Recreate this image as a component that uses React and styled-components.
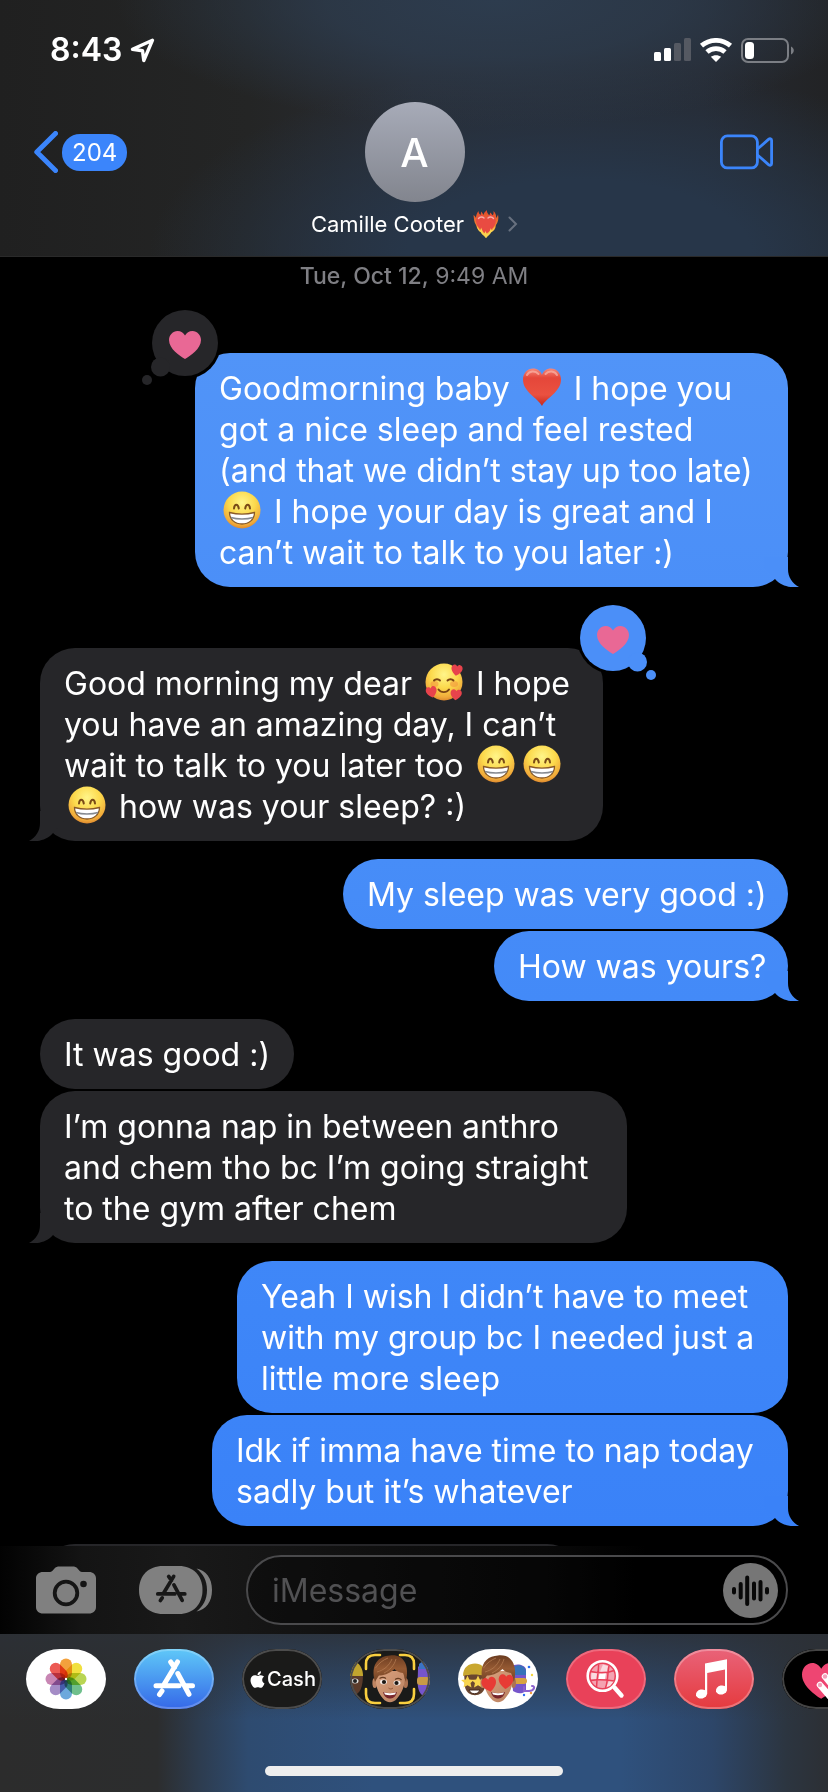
import React from "react";
import styled, { createGlobalStyle } from "styled-components";
import { FaApple } from "react-icons/fa";

const GlobalStyle = createGlobalStyle`
  * { box-sizing: border-box; }
  body { margin: 0; background: #000; font-family: Inter, "Liberation Sans", sans-serif; color: #fff; }
  button { border: 0; padding: 0; background: none; color: inherit; font: inherit; cursor: pointer; }
  svg { display: block; }
`;

const Screen = styled.div`
  display: flex;
  flex-direction: column;
  height: 100vh;
  overflow: hidden;
`;

/* ---------- header ---------- */
const Header = styled.header`
  flex: none;
  border-bottom: 1px solid #2a2a2a;
  background:
    radial-gradient(ellipse 46% 50% at 60% 0%, #2d3c4e 0%, rgba(45, 60, 78, 0.75) 45%, rgba(45, 60, 78, 0) 100%),
    radial-gradient(ellipse 52% 75% at 70% 100%, #273649 0%, #273649 40%, rgba(39, 54, 73, 0) 100%),
    linear-gradient(90deg, #202020 0%, #242525 30%, #292c33 50%, #262a32 85%, #222325 100%);
`;
const StatusBar = styled.div`
  display: flex;
  align-items: center;
  justify-content: space-between;
  height: 100px;
  padding: 0 34px 0 50px;
`;
const StatusGroup = styled.div`
  display: flex;
  align-items: center;
  gap: 8px;
`;
const Clock = styled.time`
  font-size: 32px;
  line-height: 40px;
  font-weight: 600;
`;
const NavBar = styled.nav`
  display: grid;
  grid-template-columns: 1fr auto 1fr;
  align-items: start;
  padding: 2px 55px 10px 34px;
`;
const BackButton = styled.button`
  display: flex;
  align-items: center;
  gap: 4px;
  height: 100px;
  justify-self: start;
`;
const Unread = styled.span`
  padding: 0 10px;
  border-radius: 18px;
  background: #3b85fb;
  font-size: 24px;
  line-height: 37px;
`;
const VideoButton = styled.button`
  display: flex;
  align-items: center;
  height: 100px;
  justify-self: end;
`;
const Contact = styled.button`
  display: flex;
  flex-direction: column;
  align-items: center;
  margin-left: 22px;
`;
const Avatar = styled.span`
  display: grid;
  place-items: center;
  width: 100px;
  height: 100px;
  border-radius: 50%;
  background: linear-gradient(#a7abb8, #82858e);
  font-size: 40px;
  font-weight: 500;
`;
const ContactName = styled.span`
  display: flex;
  align-items: center;
  gap: 9px;
  height: 44px;
  font-size: 22px;
`;

/* ---------- conversation ---------- */
const Conversation = styled.main`
  flex: 1;
  min-height: 0;
  overflow: hidden;
  padding: 6px 40px 0;
`;
const DateLine = styled.p`
  margin: 0 0 64px;
  text-align: center;
  font-size: 23px;
  line-height: 26px;
  color: #7f7f84;
  b { font-weight: 500; }
`;
const Group = styled.section`
  display: flex;
  flex-direction: column;
  align-items: ${(p) => (p.$sent ? "flex-end" : "flex-start")};
  gap: 2px;
  margin-bottom: ${(p) => (p.$beforeReaction ? "61px" : "18px")};
`;
const Bubble = styled.div`
  position: relative;
  width: ${(p) => p.$width};
  min-height: 70px;
  padding: 15px 0 14px 24px;
  border-radius: 35px;
  background: linear-gradient(${(p) => p.$from}, ${(p) => p.$to});
  font-size: 32px;
  line-height: 41px;
  white-space: nowrap;
`;
const Line = styled.span`
  display: block;
  height: 41px;
`;
const TailSvg = styled.svg`
  position: absolute;
  bottom: 0;
  ${(p) => (p.$sent ? "right: -11px;" : "left: -11px; transform: scaleX(-1);")}
`;
const ReactionSvg = styled.svg`
  position: absolute;
  top: -50px;
  ${(p) => (p.$sent ? "left: -60px;" : "right: -60px; transform: scaleX(-1);")}
`;
const EmojiSvg = styled.svg`
  display: inline-block;
  width: 38px;
  height: 38px;
  margin: 0 4px;
  vertical-align: -6px;
`;

/* ---------- composer ---------- */
const Composer = styled.form`
  flex: none;
  display: flex;
  align-items: center;
  height: 88px;
  padding: 0 40px 0 36px;
  background: linear-gradient(90deg, #020202 0%, #141414 10%, #191919 22%, #0e0e0e 50%, #090909 66%, #000 78%);
`;
const ToolButton = styled.button`
  flex: none;
  margin-right: ${(p) => p.$gap};
`;
const Field = styled.label`
  flex: 1;
  min-width: 0;
  display: flex;
  align-items: center;
  height: 70px;
  padding: 0 8px 0 24px;
  border: 2px solid #4a4a4c;
  border-radius: 35px;
  background: rgba(0, 0, 0, 0.3);
`;
const TextInput = styled.input`
  flex: 1;
  min-width: 0;
  padding: 0;
  border: 0;
  outline: 0;
  background: none;
  color: #fff;
  font: 32px/41px Inter, "Liberation Sans", sans-serif;
  &::placeholder { color: #515153; opacity: 1; }
`;

/* ---------- app drawer ---------- */
const Drawer = styled.footer`
  flex: none;
  display: flex;
  flex-direction: column;
  justify-content: space-between;
  align-items: center;
  height: 158px;
  padding: 15px 0 16px;
  background:
    linear-gradient(rgba(44, 48, 54, 0.85) 0%, rgba(44, 48, 54, 0) 55%),
    linear-gradient(90deg, #2c2c2c 0%, #2c2d2e 19%, #2d3c4f 24%, #2e4b70 30%, #2f517d 45%, #2f517d 75%, #2d4669 86%, #2c3540 95%, #2c2f34 100%);
`;
const AppRow = styled.div`
  align-self: stretch;
  display: flex;
  gap: 28px;
  padding-left: 26px;
  overflow: hidden;
`;
const AppIcon = styled.button`
  flex: none;
  display: grid;
  place-items: center;
  position: relative;
  width: 80px;
  height: 60px;
  overflow: hidden;
  border-radius: 34px / 30px;
  background: ${(p) => p.$bg};
  &::after {
    content: "";
    position: absolute;
    inset: 0;
    border-radius: inherit;
    border: 2px solid ${(p) => p.$rim || "transparent"};
  }
`;
const CashLabel = styled.span`
  display: flex;
  align-items: center;
  font-size: 20px;
  line-height: 26px;
  font-weight: 500;
`;
const HomeIndicator = styled.div`
  width: 36%;
  height: 10px;
  border-radius: 5px;
  background: #eeeeee;
`;

/* ---------- drawings ---------- */
const heartPath = "M16 28 C11 25 0 18 0 9 C0 4 4 0 8.500 0 C12 0 14.500 2 16 4.500 C17.500 2 20 0 23.500 0 C28 0 32 4 32 9 C32 18 21 25 16 28Z";

const Tail = ({ sent, color }) => (
  <TailSvg $sent={sent} width="35" height="30" viewBox="0 0 35 30" aria-hidden="true">
    <path d="M0 0H24V12C24 20 28 26 35 30C26 31 17 29 11 22L0 10Z" fill={color} />
  </TailSvg>
);

const Reaction = ({ sent, color }) => (
  <ReactionSvg $sent={sent} width="90" height="90" viewBox="0 0 90 90" role="img" aria-label="Loved">
    <circle cx="50" cy="40" r="36" fill="#000" />
    <circle cx="50" cy="40" r="33" fill={color} />
    <circle cx="25.500" cy="64" r="9.500" fill={color} />
    <circle cx="12" cy="77" r="5" fill={color} />
    <path d={heartPath} transform="translate(34 28)" fill="#e96895" />
  </ReactionSvg>
);

const FaceDefs = () => (
  <svg width="0" height="0" style={{ position: "absolute" }} aria-hidden="true">
    <defs>
      <radialGradient id="face" cx="50%" cy="30%" r="72%">
        <stop offset="0" stopColor="#fff58a" />
        <stop offset="0.5" stopColor="#fcd94c" />
        <stop offset="0.85" stopColor="#f0a93a" />
        <stop offset="1" stopColor="#d9822b" />
      </radialGradient>
      <linearGradient id="redHeart" x1="0" y1="0" x2="0" y2="1">
        <stop offset="0" stopColor="#f58a7c" />
        <stop offset="0.25" stopColor="#e5473a" />
        <stop offset="0.7" stopColor="#ea5140" />
        <stop offset="1" stopColor="#c5281c" />
      </linearGradient>
      <linearGradient id="flame" x1="0" y1="0" x2="0" y2="1">
        <stop offset="0" stopColor="#e2452a" />
        <stop offset="0.6" stopColor="#f08a35" />
        <stop offset="1" stopColor="#fbe05a" />
      </linearGradient>
      <linearGradient id="hair" x1="0" y1="0" x2="0" y2="1">
        <stop offset="0" stopColor="#6b3c20" />
        <stop offset="0.5" stopColor="#965a33" />
        <stop offset="1" stopColor="#6f4124" />
      </linearGradient>
      <linearGradient id="skin" x1="0" y1="0" x2="1" y2="1">
        <stop offset="0" stopColor="#dba380" />
        <stop offset="1" stopColor="#b87f5e" />
      </linearGradient>
    </defs>
  </svg>
);

const Grin = () => (
  <EmojiSvg viewBox="0 0 38 38" role="img" aria-label="Grinning face">
    <circle cx="19" cy="19" r="18.500" fill="url(#face)" />
    <path d="M11 17.500C11.500 12.500 15 12.500 15.800 17.500M22.200 17.500C23 12.500 26.500 12.500 27 17.500" fill="none" stroke="#7a4a16" strokeWidth="2" strokeLinecap="round" />
    <path d="M6.500 21.500C14 23.500 24 23.500 31.500 21.500C31.500 28.500 26 33 19 33S6.500 28.500 6.500 21.500Z" fill="#fff" stroke="#8a5a28" strokeWidth="1.300" />
    <path d="M8 26.500C14 28.500 24 28.500 30 26.500" fill="none" stroke="#868a90" strokeWidth="1.400" />
  </EmojiSvg>
);

const RedHeart = () => (
  <EmojiSvg viewBox="0 0 38 38" role="img" aria-label="Red heart">
    <path d="M19 38C15 30 0 24 0 11.500C0 5 4.500.5 10 .5C14.500.5 17.800 3 19 7C20.200 3 23.500.5 28 .5C33.500.5 38 5 38 11.500C38 24 23 30 19 38Z" fill="url(#redHeart)" />
    <path d="M4 7C6 3 12 2 15.500 6M22.500 6C26 2 32 3 34 7" fill="none" stroke="#fbb5a8" strokeWidth="2" strokeLinecap="round" opacity="0.7" />
  </EmojiSvg>
);

const SmilingHearts = () => (
  <EmojiSvg viewBox="0 0 38 38" role="img" aria-label="Smiling face with hearts">
    <circle cx="19" cy="19" r="18.500" fill="url(#face)" />
    <ellipse cx="9.500" cy="21" rx="4" ry="3" fill="#f08a3c" opacity="0.5" />
    <ellipse cx="29" cy="21" rx="4" ry="3" fill="#f08a3c" opacity="0.5" />
    <path d="M9 17.500C10.500 15.800 13.500 15.800 15 17.500M22.500 17.500C24 15.800 27 15.800 28.500 17.500M13.500 26.500C16 30 21.500 30 24 26.500" fill="none" stroke="#7a4314" strokeWidth="1.900" strokeLinecap="round" />
    <path d={heartPath} transform="translate(27 1) rotate(8) scale(.35 .4)" fill="#e8434c" />
    <path d={heartPath} transform="translate(0 25) rotate(-14) scale(.34 .4)" fill="#e8434c" />
    <path d={heartPath} transform="translate(26 26) rotate(6) scale(.35 .38)" fill="#e8434c" />
  </EmojiSvg>
);

const HeartOnFire = () => (
  <svg width="26" height="28" viewBox="0 0 26 28" role="img" aria-label="Heart on fire">
    <path d="M13 28C11 25 9 25 8 22C5 21 4 18 3 15C1 12 1 9 0.500 5C2 6 2.500 7 3 8C3 5 4 3 5.500 1C5.500 3 6.500 4 7.500 5C8 3.500 8 2.500 8 1.500C9.500 3 10 4 10.500 5C11 3 12 1.500 14 0C13.500 3 15.500 3.500 16 5.500C17 4.500 17 3.500 17 2.500C18.500 3.500 19 4.500 19.500 5.500C21 4.500 20.500 2.500 20.500 1C22.500 3 23.500 5 23 8C24 7 24.500 6 25 4.500C26 9 25 12 23 15C22.500 19 21 21 18 22C17 25 15 25 13 28Z" fill="url(#flame)" />
    <path d={heartPath} transform="translate(3 5) scale(.62 .68)" fill="#e94b42" />
    <path d="M5.500 8.500C7 6.500 9.500 6.500 11 8M15 8C16.500 6.500 19 6.500 20.500 8.500" stroke="#f9b0a6" strokeWidth="1.400" fill="none" strokeLinecap="round" />
    <path d="M4 16C5.500 17.500 5.500 19 7 20.500C7.800 19.500 8 18.500 8 17.500C9.500 20 9.500 22 11 24C12 23 12 22 12.500 21C13.200 22.500 13.500 24 15 24.500C16.500 22 17.500 20 17.500 18C18 19.500 18.500 20 19 20.500C20.500 19 21 17.500 22 16C21.500 19 20.500 21 18 22.500C17 24.500 15 25 13 28C11 25 9 25 8 22.500C5.500 21 4.500 19 4 16Z" fill="#fad34f" />
  </svg>
);

const LocationIcon = () => (
  <svg width="25" height="25" viewBox="0 0 25 25" aria-hidden="true">
    <path d="M22.500 2.200L2.500 11.300L12.500 12.800L13.800 22.500Z" fill="none" stroke="#fff" strokeWidth="3.400" strokeLinejoin="round" />
  </svg>
);

const SignalIcon = () => (
  <svg width="37" height="24" viewBox="0 0 37 24" role="img" aria-label="Signal, two of four bars">
    <rect x="0" y="14" width="7" height="9" rx="1.500" fill="#fff" />
    <rect x="10" y="10" width="7" height="13" rx="1.500" fill="#fff" />
    <rect x="20" y="5" width="7" height="18" rx="1.500" fill="#555962" />
    <rect x="30" y="0" width="7" height="23" rx="1.500" fill="#555962" />
  </svg>
);

const WifiIcon = () => (
  <svg width="34" height="24" viewBox="0 0 34 24" role="img" aria-label="Wi-Fi">
    <path d="M2.500 7.700C11 .6 23 .6 31.500 7.700M8 14C13 9.500 21 9.500 26 14" fill="none" stroke="#fff" strokeWidth="4.800" />
    <path d="M17 24L11.800 18.800C14.500 16.600 19.500 16.600 22.200 18.800Z" fill="#fff" />
  </svg>
);

const BatteryIcon = () => (
  <svg width="53" height="25" viewBox="0 0 53 25" role="img" aria-label="Battery, low">
    <rect x="1" y="1" width="46" height="23" rx="6" fill="none" stroke="#7b7e84" strokeWidth="2" />
    <rect x="4" y="4" width="9" height="17" rx="3.500" fill="#fff" />
    <path d="M50 8.500C53.700 10 53.700 15 50 16.500Z" fill="#7b7e84" />
  </svg>
);

const BackIcon = () => (
  <svg width="24" height="42" viewBox="0 0 24 42" aria-hidden="true">
    <path d="M21.500 2.500L2.800 21L21.500 39.500" fill="none" stroke="#3b85fb" strokeWidth="5" strokeLinecap="round" strokeLinejoin="round" />
  </svg>
);

const VideoIcon = () => (
  <svg width="53" height="36" viewBox="0 0 53 36" aria-hidden="true">
    <g fill="none" stroke="#3b85fb" strokeWidth="2.800" strokeLinejoin="round">
      <rect x="1.400" y="1.900" width="36" height="32" rx="6" />
      <path d="M37.500 15L48.500 5.400C50 4.200 51.600 4.700 51.600 6.500V29.500C51.600 31.300 50 31.800 48.500 30.600L37.500 21" />
    </g>
  </svg>
);

const StoreA = ({ color }) => (
  <g fill="none" stroke={color} strokeWidth="5" strokeLinecap="round">
    <path d="M43.500 13L30 35.500M36.700 13L40.500 18.500M43.800 24.500L55 45.300M22 36.700H45M52 36.700H58.500M28 42L25.500 45.500" />
  </g>
);

const CameraIcon = () => (
  <svg width="60" height="48" viewBox="0 0 60 48" aria-hidden="true">
    <path d="M7 6H14C17 6 18 1 22 .5H38C42 1 43 6 46 6H53C57 6 60 8.500 60 12.500V41C60 45 57 47.500 53 47.500H7C3 47.500 0 45 0 41V12.500C0 8.500 3 6 7 6Z" fill="#808080" />
    <circle cx="30" cy="27" r="11.300" fill="none" stroke="#151515" strokeWidth="3.800" />
    <circle cx="47.500" cy="18" r="3.300" fill="#151515" />
  </svg>
);

const AppsIcon = () => (
  <svg width="74" height="48" viewBox="0 0 74 48" aria-hidden="true">
    <path d="M24 0H40C54 0 63.500 9.500 63.500 24S54 48 40 48H24C9.500 48 0 38.500 0 24S9.500 0 24 0Z" fill="#808080" />
    <path d="M57.500 2.500C67 4.500 73 12 73 24S67 43.500 57.500 45.500C64 40.500 68 33.500 68 24S64 7.500 57.500 2.500Z" fill="#808080" />
    <g transform="translate(2.500 .8) scale(.74)"><StoreA color="#171717" /></g>
  </svg>
);

const VoiceIcon = () => (
  <svg width="55" height="55" viewBox="0 0 55 55" aria-hidden="true">
    <circle cx="27.500" cy="27.500" r="27.500" fill="#767676" />
    <path d="M11 26V29.500M17.700 21V34.500M24.200 14.500V41M31 20.500V35.500M37.500 19V36.500M44 26V29.500" stroke="#080808" strokeWidth="4" strokeLinecap="round" />
  </svg>
);

const petals = ["#f3a13c", "#f1e03f", "#b9d553", "#6fbf8c", "#6ca8dc", "#a48cc6", "#c886b4", "#ec5a54"];
const PhotosArt = () => (
  <svg width="80" height="60" viewBox="0 0 80 60" aria-hidden="true">
    <g transform="translate(40 30)">
      {petals.map((c, i) => (
        <rect key={c} x="-6" y="-20.500" width="12" height="20.500" rx="6" fill={c} transform={`rotate(${i * 45})`} style={{ mixBlendMode: "multiply" }} />
      ))}
      <circle r="1.200" fill="#fff" />
    </g>
  </svg>
);

const StoreArt = () => (
  <svg width="80" height="60" viewBox="0 0 80 60" aria-hidden="true"><StoreA color="#fff" /></svg>
);

const Person = ({ hearts }) => (
  <g>
    <ellipse cx="24.800" cy="34" rx="2.400" ry="5" fill="#c08562" />
    <ellipse cx="55.600" cy="34" rx="2.400" ry="5" fill="#ad7352" />
    <path d="M26 22C24.500 36 28 44 33 49.500C37 54.500 43 54.500 47 49.500C52 44 56 36 54.500 22Z" fill="url(#skin)" />
    <path d="M25 33C20 15 29 7 40 6.500C53 5 60 15 56 33C54.500 30 54.500 27 53 24C49 23.500 46 22 44.500 20C39 25 33 26.500 29 26.500C27.500 28.500 26.500 30 25 33Z" fill="url(#hair)" />
    <path d="M27 23C34 21 39 17 42 10M34 24C40 21 44 17 46 10M25.500 19C29 14 33 11 38 9" fill="none" stroke="#b27a50" strokeWidth="0.800" />
    {hearts ? (
      <g fill="#e73b35">
        <path d={heartPath} transform="translate(22.500 30) rotate(-12) scale(.46 .52)" />
        <path d={heartPath} transform="translate(41 25) rotate(4) scale(.46 .52)" />
      </g>
    ) : (
      <g>
        <ellipse cx="33.500" cy="33" rx="3.500" ry="2.400" fill="#f6ece6" />
        <ellipse cx="47" cy="34" rx="3.500" ry="2.400" fill="#f6ece6" />
        <circle cx="34" cy="33" r="2.100" fill="#1c1713" />
        <circle cx="46.500" cy="34" r="2.100" fill="#1c1713" />
        <path d="M29.500 29.500C32 28 34.500 28.500 36 29.500M45 30.500C47.500 29 50 29.500 51.500 31" stroke="#673d22" strokeWidth="1.200" fill="none" />
        <path d="M38.500 39C40 40.300 41.500 40.300 43 39" fill="none" stroke="#94593a" strokeWidth="1" />
      </g>
    )}
    <path d="M33 43C37 44.300 43 44.300 47 43C46 48.500 42 49.500 40 49.500S34 48.500 33 43Z" fill="#78262b" />
    <path d="M34 43.500C38 44.600 42 44.600 46 43.500L45 45.500C41 46.500 38 46.300 35 45.500Z" fill="#fff" />
  </g>
);

const MemojiArt = () => (
  <svg width="80" height="60" viewBox="0 0 80 60" aria-hidden="true">
    <path d="M-6 25H13C13 38 10 46 3 46S-6 40 -6 30Z" fill="#5b3b2b" />
    <path d="M-6 27C-4 15 3 12 6 13C11 16 13 21 13 27Z" fill="#c2a52e" />
    <ellipse cx="5" cy="32" rx="3.500" ry="2.500" fill="#ddd" /><circle cx="5" cy="32" r="2" fill="#222" />
    <path d="M68 18C72 13 82 12 86 18V46H72C66 40 68 32 68 18Z" fill="#7655cb" />
    <path d="M69 15C74 10 82 11 84 20H69Z" fill="#3b73c4" />
    <rect x="67" y="28" width="18" height="8" rx="3" fill="#c99b45" />
    <Person />
    <path d="M16 20V15C16 9 19 6 25 6H30M50 6H55C61 6 64 9 64 15V20M16 40V45C16 51 19 54 25 54H30M50 54H55C61 54 64 51 64 45V40" fill="none" stroke="#f9cf3f" strokeWidth="2.600" strokeLinecap="round" />
  </svg>
);

const star = "M0 -8L2.300 -3L8 -2.500L3.800 1.300L5 7L0 4L-5 7L-3.800 1.300L-8 -2.500L-2.300 -3Z";
const StickersArt = () => (
  <svg width="80" height="60" viewBox="0 0 80 60" aria-hidden="true">
    <path d="M6 24H27V38C25 49 9 49 7 38Z" fill="#6a4630" />
    <path d="M5 27C5 18 11 14.500 17 14.500S28 18 27 27C20 25 12 25 5 27Z" fill="#c9a730" />
    <path d={star} transform="translate(9.500 33) scale(.8)" fill="#f8d44d" />
    <path d={star} transform="translate(20 33) scale(.8)" fill="#f8d44d" />
    <path d="M11 41H22C20 46 13 46 11 41Z" fill="#fff" stroke="#40251a" />
    <path d="M53 18C57 14 66 15 68 20V42C63 46 58 44 55 42Z" fill="#7655cb" />
    <path d="M53 22C54 16 65 13 68 22V26H54Z" fill="#3672b8" />
    <rect x="55" y="29" width="14" height="6" rx="3" fill="#d9a441" />
    <path d="M66 38V42H71C76 42 78 37 74 37" fill="none" stroke="#8c62cf" strokeWidth="2" strokeLinecap="round" />
    <circle cx="71" cy="18" r="1.300" fill="#2b6cf0" /><circle cx="74" cy="26" r="1.200" fill="#f3d63d" />
    <circle cx="66" cy="46" r="1.200" fill="#2b6cf0" /><circle cx="73" cy="44" r="1.200" fill="#f09a3c" />
    <Person hearts />
  </svg>
);

const SearchArt = () => (
  <svg width="80" height="60" viewBox="0 0 80 60" aria-hidden="true">
    <circle cx="36.500" cy="27" r="12" fill="#f4a3b1" />
    <path d="M37 15.500L42 17L41 22.500H34ZM25.500 24H32L31 30H25ZM43 32H48L44 37L40 38Z" fill="#fadbe0" />
    <path d="M33.500 24H40L39 30.500H32.500Z" fill="#fff" />
    <path d="M32.500 15.500C33 20 31 26 30.500 39M43 17C41.500 22 42.500 30 39.500 39M25 22.500C32 24 42 24 48 21.500M25 31.500C32 30 42 31 48 32" stroke="#e94159" strokeWidth="1.500" fill="none" />
    <circle cx="36.500" cy="27" r="14.800" fill="none" stroke="#fff" strokeWidth="2.600" />
    <path d="M48.500 38.500L55.500 46.500" stroke="#fff" strokeWidth="4.400" strokeLinecap="round" />
  </svg>
);

const MusicArt = () => (
  <svg width="80" height="60" viewBox="0 0 80 60" aria-hidden="true">
    <path d="M31 14.500L53 10.200V40.500H51V20.500L33.200 24V45H31Z" fill="#fff" />
    <ellipse cx="27.500" cy="45" rx="5.600" ry="4.500" fill="#fff" transform="rotate(-12 27.500 45)" />
    <ellipse cx="47.500" cy="41" rx="5.600" ry="4.500" fill="#fff" transform="rotate(-12 47.500 41)" />
  </svg>
);

const TouchArt = () => (
  <svg width="80" height="60" viewBox="0 0 80 60" aria-hidden="true">
    <path d={heartPath} transform="translate(20 14) scale(1.200 1.280)" fill="#ee4572" />
    <g stroke="#fff" strokeWidth="6.500" strokeLinecap="round">
      <path d="M43 27.500L54 41M38 36L50 50" />
    </g>
    <circle cx="43" cy="27.500" r="2.200" fill="#f3a0bb" />
    <circle cx="38" cy="36" r="2.200" fill="#f3a0bb" />
  </svg>
);

/* ---------- data ---------- */
const dark = ["#262629", "#262629"];
const groups = [
  {
    sent: true,
    beforeReaction: true,
    messages: [
      {
        width: "593px",
        colors: ["#5194f8", "#4b8ff8"],
        reaction: "#262629",
        lines: [
          <>Goodmorning baby <RedHeart /> I hope you</>,
          "got a nice sleep and feel rested",
          "(and that we didn’t stay up too late)",
          <><Grin /> I hope your day is great and I</>,
          "can’t wait to talk to you later :)",
        ],
      },
    ],
  },
  {
    messages: [
      {
        width: "563px",
        colors: dark,
        reaction: "#4b8ff8",
        lines: [
          <>Good morning my dear <SmilingHearts /> I hope</>,
          "you have an amazing day, I can’t",
          <>wait to talk to you later too <Grin /><Grin /></>,
          <><Grin /> how was your sleep? :)</>,
        ],
      },
    ],
  },
  {
    sent: true,
    messages: [
      { width: "445px", colors: ["#478df8", "#458bf8"], lines: ["My sleep was very good :)"] },
      { width: "294px", colors: ["#458bf8", "#438af8"], lines: ["How was yours?"] },
    ],
  },
  {
    messages: [
      { width: "254px", colors: dark, lines: ["It was good :)"] },
      {
        width: "587px",
        colors: dark,
        lines: ["I’m gonna nap in between anthro", "and chem tho bc I’m going straight", "to the gym after chem"],
      },
    ],
  },
  {
    sent: true,
    messages: [
      {
        width: "551px",
        colors: ["#3f87f8", "#3c84f8"],
        lines: ["Yeah I wish I didn’t have to meet", "with my group bc I needed just a", "little more sleep"],
      },
      { width: "576px", colors: ["#3c84f8", "#3a82f8"], lines: ["Idk if imma have time to nap today", "sadly but it’s whatever"] },
    ],
  },
  { messages: [{ width: "542px", colors: dark, lines: [] }] },
];

const apps = [
  { name: "Photos", bg: "#fff", art: <PhotosArt /> },
  { name: "App Store", bg: "linear-gradient(#5fc8f8, #3568e8)", rim: "rgba(255,255,255,.22)", art: <StoreArt /> },
  { name: "Apple Cash", bg: "#1a1a19", rim: "#4c4c4c", art: <CashLabel><FaApple size={19} />Cash</CashLabel> },
  { name: "Memoji", bg: "#1a1a19", rim: "#4c4c4c", art: <MemojiArt /> },
  { name: "Memoji stickers", bg: "#fff", art: <StickersArt /> },
  { name: "Image search", bg: "#e94159", rim: "rgba(255,255,255,.22)", art: <SearchArt /> },
  { name: "Music", bg: "linear-gradient(#e96379, #e53a3e)", rim: "rgba(255,255,255,.28)", art: <MusicArt /> },
  { name: "Digital Touch", bg: "#000", rim: "#444", art: <TouchArt /> },
];

export default function App() {
  return (
    <Screen>
      <GlobalStyle />
      <FaceDefs />
      <Header>
        <StatusBar>
          <StatusGroup>
            <Clock>8:43</Clock>
            <LocationIcon />
          </StatusGroup>
          <StatusGroup>
            <SignalIcon />
            <WifiIcon />
            <BatteryIcon />
          </StatusGroup>
        </StatusBar>
        <NavBar>
          <BackButton type="button" aria-label="Back, 204 unread">
            <BackIcon />
            <Unread>204</Unread>
          </BackButton>
          <Contact type="button">
            <Avatar>A</Avatar>
            <ContactName>
              Camille Cooter
              <HeartOnFire />
              <svg width="10" height="16" viewBox="0 0 10 16" aria-hidden="true">
                <path d="M1.500 1.500L8 8L1.500 14.500" fill="none" stroke="#68717f" strokeWidth="2" strokeLinecap="round" />
              </svg>
            </ContactName>
          </Contact>
          <VideoButton type="button" aria-label="Video call">
            <VideoIcon />
          </VideoButton>
        </NavBar>
      </Header>

      <Conversation>
        <DateLine><b>Tue, Oct 12,</b> 9:49 AM</DateLine>
        {groups.map((g, gi) => (
          <Group key={gi} $sent={g.sent} $beforeReaction={g.beforeReaction}>
            {g.messages.map((m, mi) => (
              <Bubble key={mi} $width={m.width} $from={m.colors[0]} $to={m.colors[1]}>
                {m.lines.map((line, li) => <Line key={li}>{line}</Line>)}
                {mi === g.messages.length - 1 && <Tail sent={g.sent} color={m.colors[1]} />}
                {m.reaction && <Reaction sent={g.sent} color={m.reaction} />}
              </Bubble>
            ))}
          </Group>
        ))}
      </Conversation>

      <Composer onSubmit={(e) => e.preventDefault()}>
        <ToolButton type="button" $gap="43px" aria-label="Camera"><CameraIcon /></ToolButton>
        <ToolButton type="button" $gap="33px" aria-label="Apps"><AppsIcon /></ToolButton>
        <Field>
          <TextInput type="text" placeholder="iMessage" aria-label="Message" />
          <button type="button" aria-label="Record audio"><VoiceIcon /></button>
        </Field>
      </Composer>

      <Drawer>
        <AppRow>
          {apps.map((a) => (
            <AppIcon key={a.name} type="button" aria-label={a.name} $bg={a.bg} $rim={a.rim}>
              {a.art}
            </AppIcon>
          ))}
        </AppRow>
        <HomeIndicator />
      </Drawer>
    </Screen>
  );
}
